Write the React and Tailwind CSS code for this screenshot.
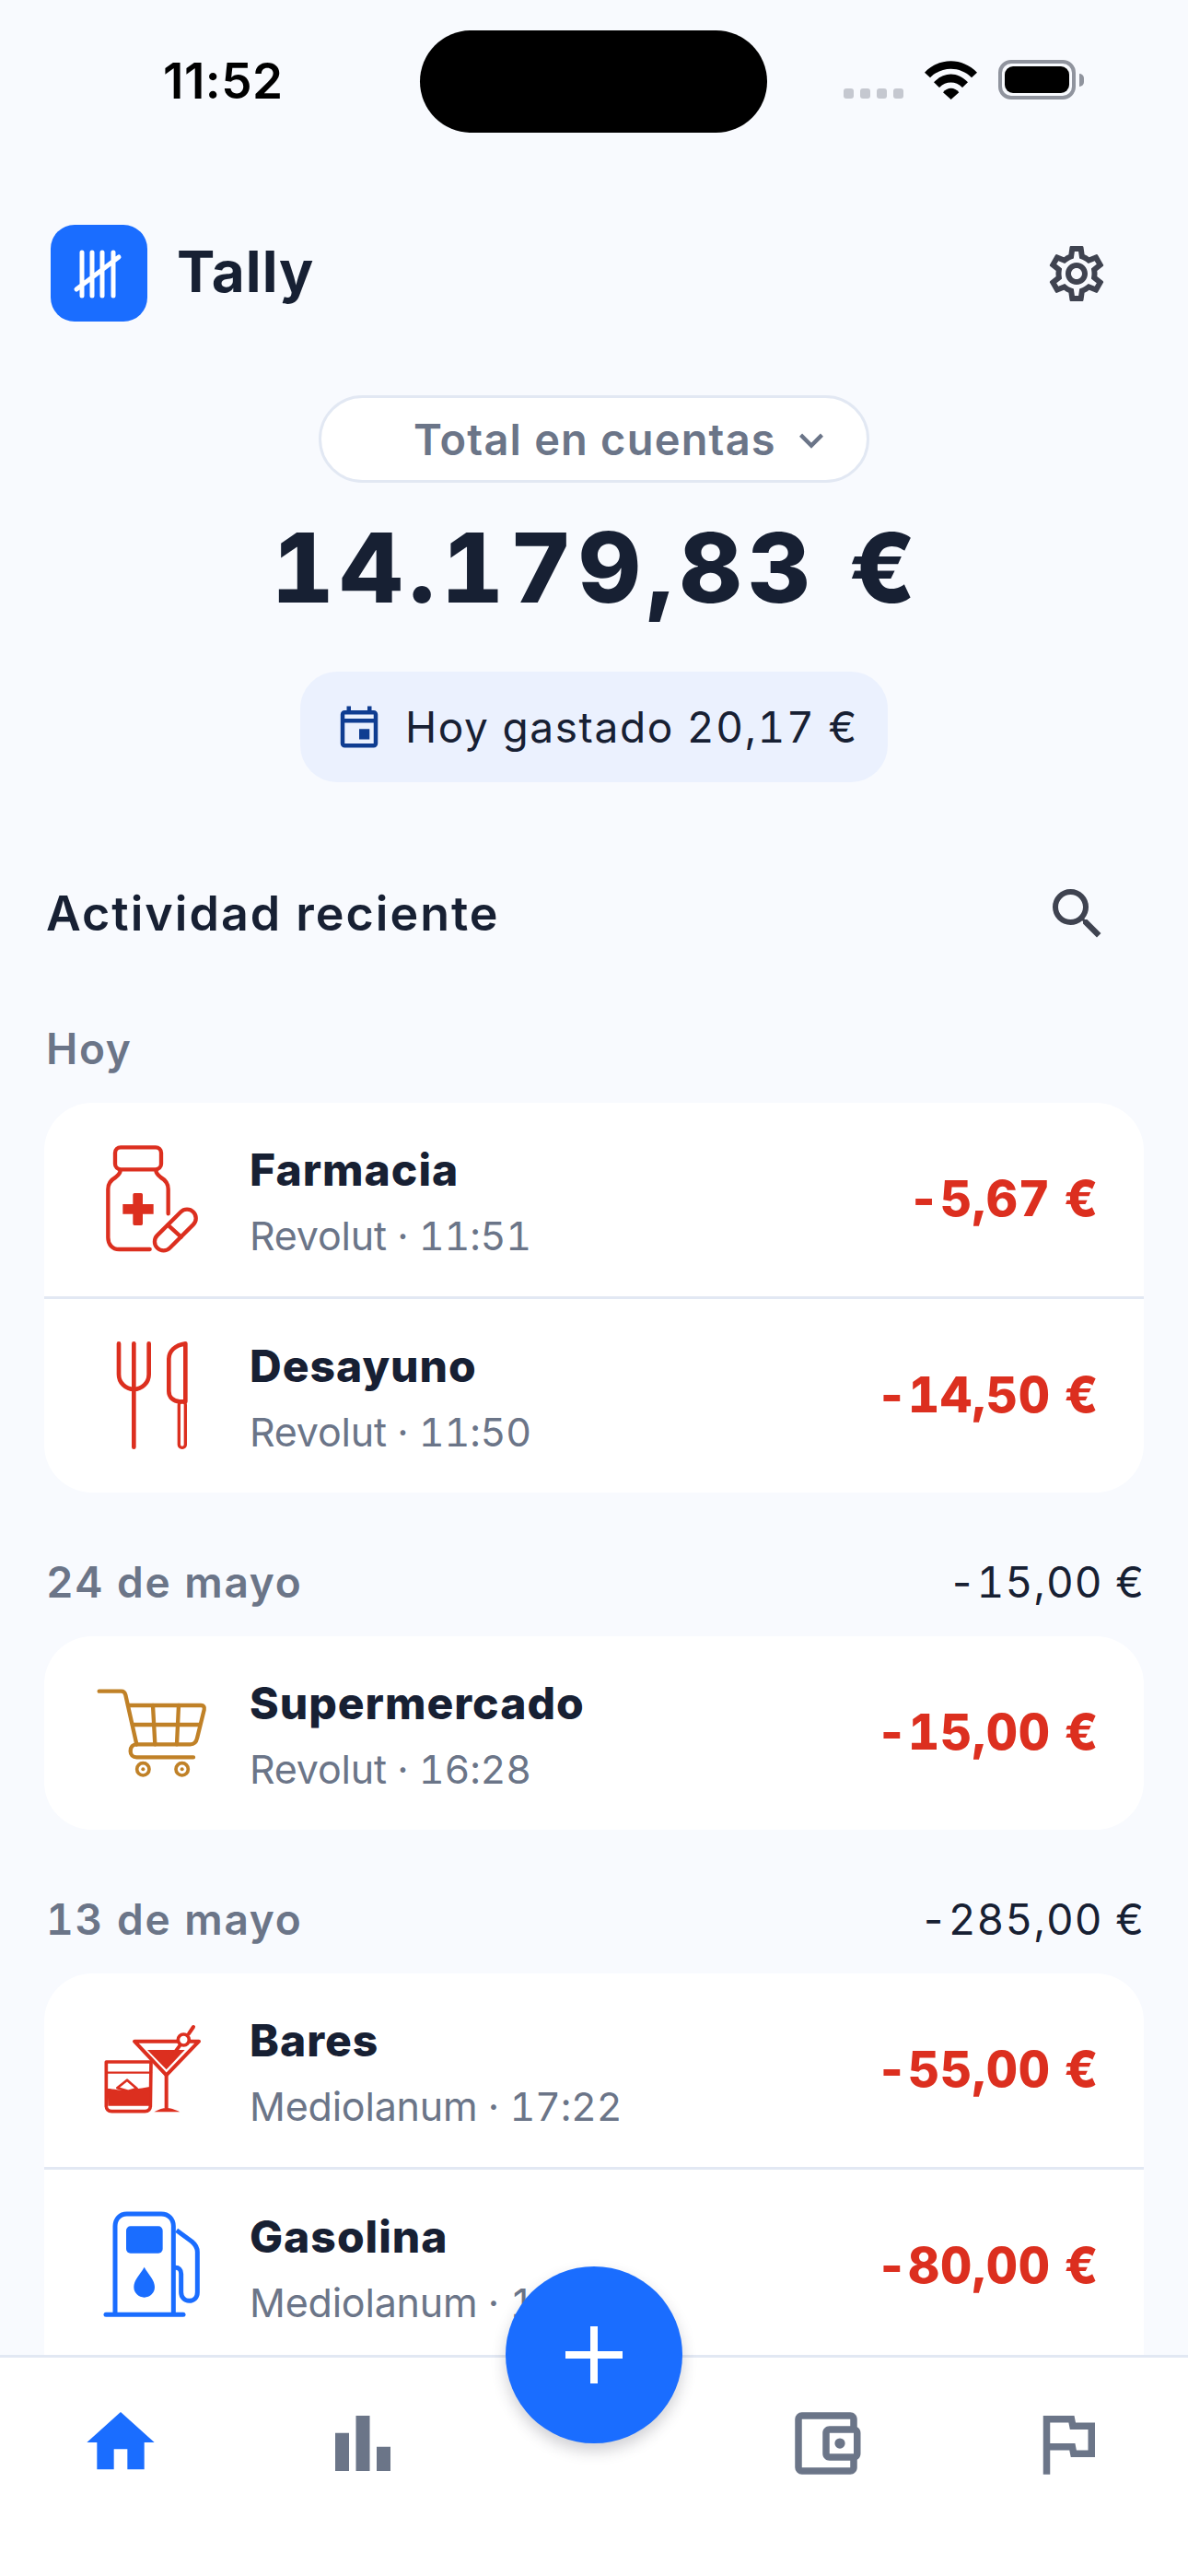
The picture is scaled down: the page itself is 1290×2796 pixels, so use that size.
import React from 'react';
import {
    MdBarChart,
    MdHome,
    MdOutlineAccountBalanceWallet,
    MdOutlineEvent,
    MdOutlineFlag,
    MdOutlineKeyboardArrowDown,
    MdOutlineSearch,
    MdOutlineSettings,
} from 'react-icons/md';

const RED = '#dc2f1f';
const BLUE = '#1a6dff';

// category icons are drawn in a 360 unit box, viewBox origin picks the drawing
const PharmacyIcon = () => (
    <svg width="120" height="120" viewBox="195 186 360 360" fill="none" stroke={RED} strokeWidth="13" strokeLinecap="round" strokeLinejoin="round">
        <rect x="255" y="196" width="150" height="72" rx="18" />
        <path d="M272 270c0 12-8 18-16 24-14 8-24 20-24 38v158c0 22 14 38 36 38h100" />
        <path d="M388 270c0 12 8 18 16 24 14 8 24 20 24 38v80" />
        <path d="M313 350a5 5 0 0 1 5-5h22a5 5 0 0 1 5 5v31h35v32h-35v32a5 5 0 0 1-5 5h-22a5 5 0 0 1-5-5v-32h-33v-32h33z" fill={RED} stroke="none" />
        <rect x="368" y="436" width="166" height="58" rx="29" transform="rotate(-45 451 465)" />
        <path d="M427 449l43 39" />
    </svg>
);

const FoodIcon = () => (
    <svg width="120" height="120" viewBox="195 825 360 360" fill="none" stroke={RED} strokeWidth="14" strokeLinecap="round" strokeLinejoin="round">
        <path d="M267 835v100a49 49 0 0 0 98 0V835" />
        <path d="M316 835v337" />
        <path d="M484 835c-34 5-54 25-54 50v105c0 20 15 32 35 34h19z" />
        <rect x="463" y="1024" width="21" height="150" rx="10" strokeWidth="10" />
    </svg>
);

const CartIcon = () => (
    <svg width="120" height="120" viewBox="195 153 360 360" fill="none" stroke="#c08127" strokeWidth="13" strokeLinecap="round" strokeLinejoin="round">
        <path d="M203 197h72c8 0 12 4 14 12l36 161" />
        <path d="M297 243h238c8 0 12 6 10 14l-23 93c-3 14-10 20-22 20H325" />
        <path d="M312 306h218M378 243l7 127M462 243l-6 127" />
        <path d="M325 370c-12 0-20 8-20 22 0 12 8 20 20 20h185" />
        <circle cx="346" cy="451" r="20" strokeWidth="11" />
        <circle cx="473" cy="451" r="20" strokeWidth="11" />
        <circle cx="346" cy="451" r="6" fill="#c08127" stroke="none" />
        <circle cx="473" cy="451" r="6" fill="#c08127" stroke="none" />
    </svg>
);

const DrinksIcon = () => (
    <svg width="120" height="120" viewBox="195 54 360 360" fill="none" stroke={RED} strokeWidth="12" strokeLinecap="round" strokeLinejoin="round">
        <path d="M318 140h210L422 250z" />
        <path d="M360 168h122l-60 64z" fill={RED} stroke="none" />
        <path d="M495 115l15-22M465 155l-15 20" />
        <circle cx="478" cy="135" r="18" fill="#ffffff" strokeWidth="11" />
        <path d="M422 250v105" />
        <path d="M382 370c15-9 30-13 40-13s28 4 44 13z" fill={RED} stroke="none" />
        <path d="M226 207h146l-2 143c0 10-6 18-18 18H244c-12 0-18-8-18-18z" strokeWidth="11" />
        <path d="M226 242h146" strokeWidth="7" />
        <path d="M230 294c10 0 22 2 32 4 25 4 60-2 106-10v62H232z" fill={RED} stroke="none" />
        <path d="M262 292l32-26 32 28-28 8z" fill="#ffffff" strokeWidth="8" />
    </svg>
);

const FuelIcon = () => (
    <svg width="120" height="120" viewBox="195 696 360 360" fill="none" stroke={BLUE} strokeWidth="15" strokeLinecap="round" strokeLinejoin="round">
        <path d="M255 1030V745c0-24 16-40 38-40h112c24 0 40 16 40 40v285" />
        <path d="M225 1033h252" />
        <rect x="291" y="745" width="119" height="88" rx="14" fill={BLUE} stroke="none" />
        <path d="M350 878c-15 27-34 42-34 65a34 34 0 0 0 68 0c0-23-19-38-34-65z" fill={BLUE} stroke="none" />
        <path d="M455 758l50 37c12 10 18 18 18 34v131c0 18-12 28-27 28s-26-12-26-28v-60c0-14-8-20-18-20h-7" strokeLinecap="butt" />
    </svg>
);

const groups = [
    {
        label: 'Hoy',
        top: 'mt-[86px]',
        items: [
            { name: 'Farmacia', sub: 'Revolut · 11:51', amount: '-5,67 €', Icon: PharmacyIcon },
            { name: 'Desayuno', sub: 'Revolut · 11:50', amount: '-14,50 €', Icon: FoodIcon },
        ],
    },
    {
        label: '24 de mayo',
        total: '-15,00 €',
        top: 'mt-[69px]',
        items: [{ name: 'Supermercado', sub: 'Revolut · 16:28', amount: '-15,00 €', Icon: CartIcon }],
    },
    {
        label: '13 de mayo',
        total: '-285,00 €',
        top: 'mt-[69px]',
        // list keeps scrolling behind the nav
        card: 'pb-[80px]',
        items: [
            { name: 'Bares', sub: 'Mediolanum · 17:22', amount: '-55,00 €', Icon: DrinksIcon },
            { name: 'Gasolina', sub: 'Mediolanum · 17:20', amount: '-80,00 €', Icon: FuelIcon },
        ],
    },
];

const Row = ({ item, last }) => {
    const { Icon } = item;
    return (
        <div className={`flex h-[210px] box-content items-center pl-[57px] pr-[49px] ${last ? '' : 'border-b-[3px] border-[#e2e8f3]'}`}>
            <div className="w-[120px] shrink-0">
                <Icon />
            </div>
            <div className="ml-[46px] flex flex-1 flex-col pt-[6px]">
                <span className="text-[48px] font-extrabold leading-[52px] tracking-[1px] text-[#172033]">{item.name}</span>
                <span className="mt-[19px] text-[43px] leading-[52px] tracking-[-0.2px] tabular-nums text-[#6b7588]">{item.sub}</span>
            </div>
            <span className="text-[53px] font-extrabold tracking-[0.7px] tabular-nums text-[#dc2f1f]">{item.amount}</span>
        </div>
    );
};

const Group = ({ group }) => (
    <section className={group.top}>
        <div className="flex h-[56px] items-center justify-between pl-[50px] pr-[47px]">
            <span className="text-[46px] font-semibold tracking-[1.7px] tabular-nums text-[#6b7588]">{group.label}</span>
            {group.total && <span className="text-[46px] tracking-[1.1px] tabular-nums text-[#172033]">{group.total}</span>}
        </div>
        <div className={`mx-[48px] mt-[31px] rounded-[52px] bg-white ${group.card ?? ''}`}>
            {group.items.map((item, i) => (
                <Row key={item.name} item={item} last={i === group.items.length - 1} />
            ))}
        </div>
    </section>
);

const StatusBar = () => (
    <div className="flex h-[144px] items-center pt-[33px] pl-[177px]">
        <span className="w-[279px] text-[53px] font-semibold leading-none tracking-[0.5px] text-black">11:52</span>
        <div className="h-[111px] w-[377px] rounded-full bg-black" />
        <div className="ml-[83px] mt-[-4px] flex items-end">
            <div className="mb-[1px] flex gap-[7px]">
                <div className="h-[11px] w-[11px] rounded-[3px] bg-[#c5c8d0]" />
                <div className="h-[11px] w-[11px] rounded-[3px] bg-[#c5c8d0]" />
                <div className="h-[11px] w-[11px] rounded-[3px] bg-[#c5c8d0]" />
                <div className="h-[11px] w-[11px] rounded-[3px] bg-[#c5c8d0]" />
            </div>
            <svg className="ml-[23px]" width="57" height="42" viewBox="372 75 171 126" fill="#000000">
                <path d="M372 113c48-50 123-50 171 0l-18 17c-37-38-98-38-135 0z" />
                <path d="M402 145c33-35 78-35 111 0l-18 17c-22-22-53-22-75 0z" />
                <path d="M432 178c14-18 38-18 52 0l-26 23z" />
            </svg>
            <div className="ml-[23px] flex items-center">
                <div className="h-[43px] w-[84px] rounded-[14px] border-[4px] border-[#90949e] p-[3px]">
                    <div className="h-full w-full rounded-[9px] bg-black" />
                </div>
                <div className="ml-[4px] h-[14px] w-[5px] rounded-r-full bg-[#90949e]" />
            </div>
        </div>
    </div>
);

const BottomNav = () => (
    <nav className="absolute inset-x-0 bottom-0 h-[240px] border-t-[3px] border-[#e2e8f3] bg-white">
        <div className="flex pl-[87px] pt-[48px]">
            <div className="w-[88px] shrink-0"><MdHome size={88} color={BLUE} /></div>
            <div className="ml-[174px] w-[90px] shrink-0"><MdBarChart size={90} color="#6b7588" /></div>
            <div className="ml-[413px] w-[90px] shrink-0"><MdOutlineAccountBalanceWallet size={90} color="#6b7588" /></div>
            <div className="ml-[172px] w-[90px] shrink-0"><MdOutlineFlag size={90} color="#6b7588" /></div>
        </div>
    </nav>
);

const App = () => {
    return (
        <div className="relative h-[2796px] w-[1290px] overflow-hidden bg-[#f8fafe] font-['Inter',sans-serif]">
            <StatusBar />

            <header className="mt-[100px] flex items-center justify-between pl-[55px] pr-[85px]">
                <div className="flex items-center">
                    <div className="h-[105px] w-[105px] rounded-[26px] bg-[#1a6dff]">
                        <svg width="105" height="105" viewBox="0 0 105 105" fill="none" stroke="#ffffff" strokeWidth="5" strokeLinecap="round">
                            <path d="M34 30v47M45 30v47M56 30v47M68 30v47M28 70l46-35" />
                        </svg>
                    </div>
                    <span className="ml-[32px] mt-[-4px] text-[62px] font-bold leading-none tracking-[1px] text-[#172033]">Tally</span>
                </div>
                <MdOutlineSettings size={72} color="#3f4350" />
            </header>

            <div className="mt-[80px] flex flex-col items-center">
                <div className="flex h-[95px] w-[598px] items-center rounded-full border-[3px] border-[#e2e8f3] bg-white pl-[100px] pt-[2px]">
                    <span className="text-[47px] font-semibold tracking-[1.2px] text-[#6b7588]">Total en cuentas</span>
                    <MdOutlineKeyboardArrowDown className="ml-[12px]" size={52} color="#6b7588" />
                </div>
                <div className="ml-[6px] mt-[32px] h-[120px] text-[105px] font-extrabold leading-[120px] tracking-[6.8px] tabular-nums text-[#172033]">14.179,83 €</div>
                <div className="mt-[53px] flex h-[120px] w-[638px] items-center rounded-[40px] bg-[#ebf1fe] pl-[37px]">
                    <MdOutlineEvent size={54} color="#0f3d91" />
                    <span className="ml-[23px] text-[46px] tracking-[1.6px] tabular-nums text-[#172033]">Hoy gastado 20,17 €</span>
                </div>
            </div>

            <div className="mt-[111px] flex h-[64px] items-center justify-between pl-[50px] pr-[84px]">
                <span className="text-[52px] font-semibold tracking-[2px] text-[#172033]">Actividad reciente</span>
                <MdOutlineSearch size={72} color="#3f4350" />
            </div>

            {groups.map((group) => (
                <Group key={group.label} group={group} />
            ))}

            <BottomNav />

            <button className="absolute left-[549px] top-[2460px] flex h-[192px] w-[192px] items-center justify-center rounded-full bg-[#1a6dff] shadow-[0_8px_16px_rgba(40,40,60,0.22)]">
                <svg width="62" height="62" viewBox="0 0 62 62" stroke="#ffffff" strokeWidth="8">
                    <path d="M31 0v62M0 31h62" />
                </svg>
            </button>
        </div>
    );
};

export default App;
